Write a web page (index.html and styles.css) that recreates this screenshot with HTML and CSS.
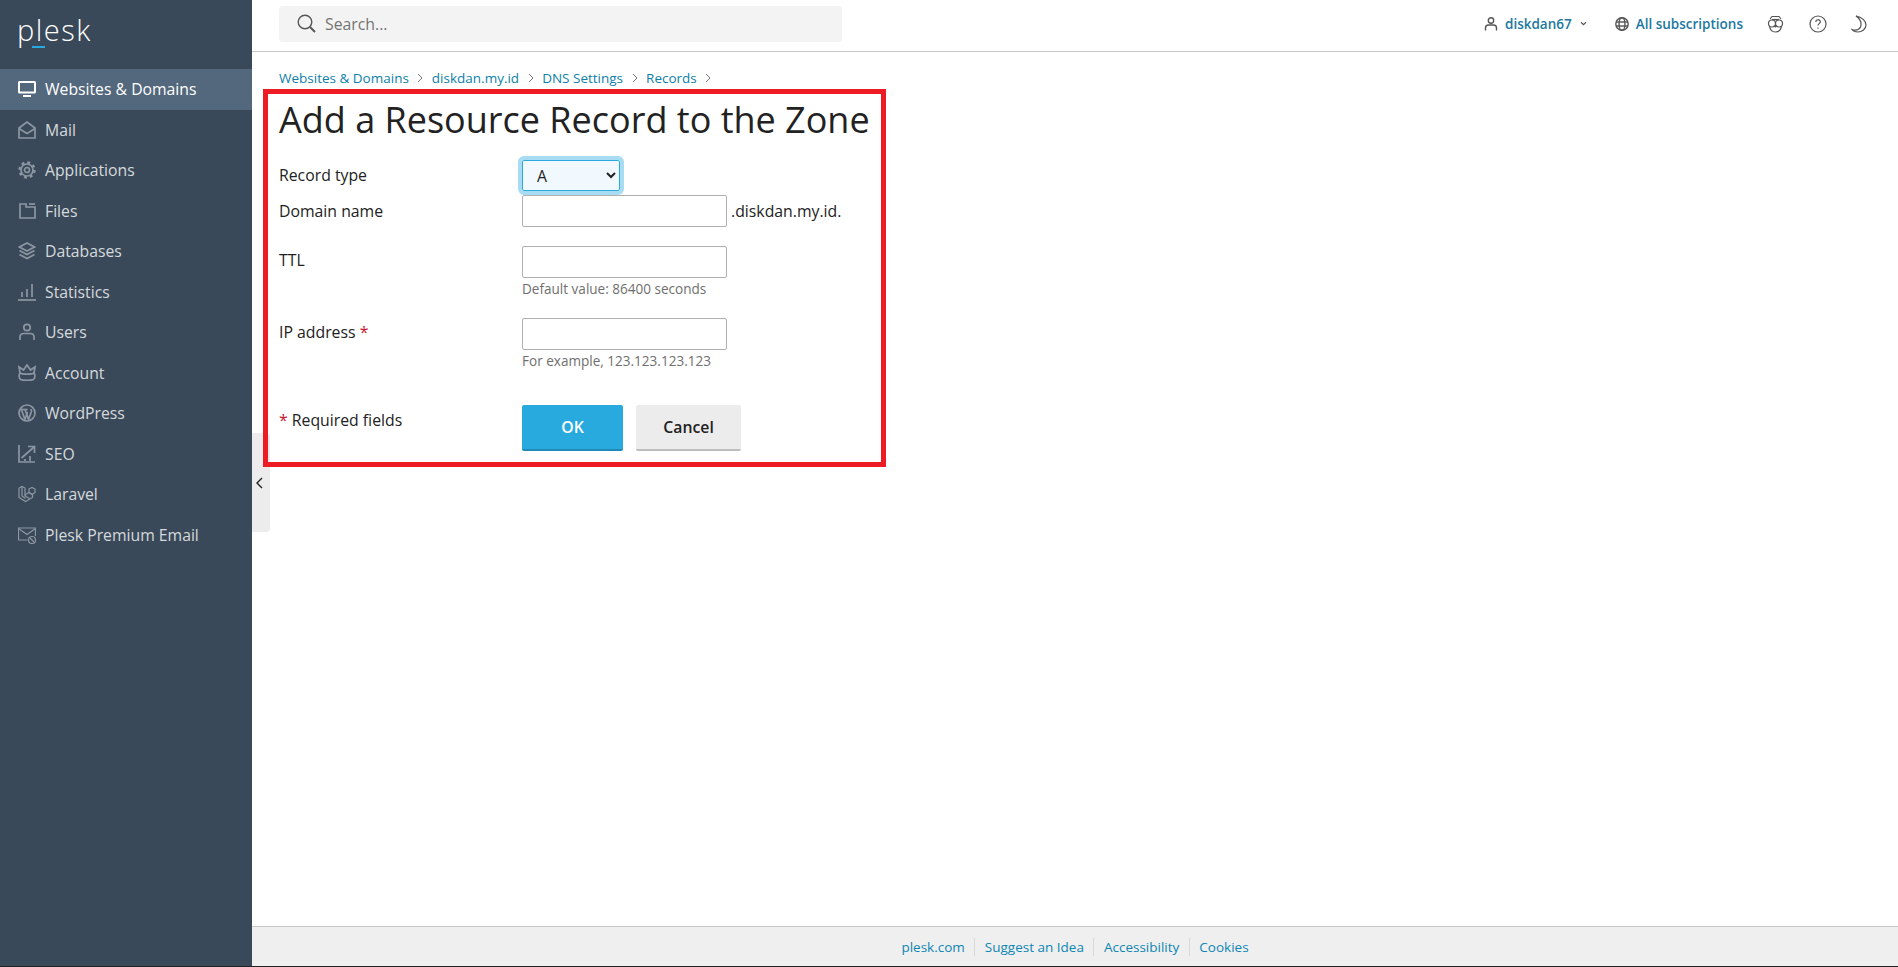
FILE: index.html
```html
<!DOCTYPE html>
<html lang="en">
<head>
  <meta charset="UTF-8">
  <title>Add a Resource Record to the Zone - Plesk</title>
  <link rel="stylesheet" href="styles.css">
</head>
<body>

  <!-- Sidebar -->
  <aside class="sidebar">
    <div class="logo">p<span class="logo-l">l</span>esk</div>
    <nav class="nav">
      <a class="nav-item active">
        <svg class="nav-icon" viewBox="0 0 18 18"><rect x="1" y="2" width="16" height="10.5" rx="0.5" stroke-width="2"/><path d="M5 16h8" stroke-width="2"/></svg>
        Websites &amp; Domains
      </a>
      <a class="nav-item">
        <svg class="nav-icon" viewBox="0 0 18 18"><path d="M1 7 9 1l8 6v10H1z"/><path d="M1 7.500l8 5 8-5"/></svg>
        Mail
      </a>
      <a class="nav-item">
        <svg class="nav-icon" viewBox="0 0 18 18"><circle cx="9" cy="9" r="2.500"/><circle cx="9" cy="9" r="6"/><circle class="gear-teeth" cx="9" cy="9" r="7.500"/></svg>
        Applications
      </a>
      <a class="nav-item">
        <svg class="nav-icon" viewBox="0 0 18 18"><path d="M2 2v14h15V5H8V2z"/><path d="M11 2h6"/></svg>
        Files
      </a>
      <a class="nav-item">
        <svg class="nav-icon" viewBox="0 0 18 18"><path d="M9 1l7.500 4L9 9 1.500 5z"/><path d="M1.500 8.500 9 12.500l7.500-4"/><path d="M1.500 12.500 9 16.500l7.500-4"/></svg>
        Databases
      </a>
      <a class="nav-item">
        <svg class="nav-icon" viewBox="0 0 18 18"><path d="M0 17h18"/><path d="M4 14V9"/><path d="M9 14V6"/><path d="M14 14V1"/></svg>
        Statistics
      </a>
      <a class="nav-item">
        <svg class="nav-icon" viewBox="0 0 18 18"><circle cx="9" cy="4.500" r="3.200"/><path d="M2 17v-3c0-2.500 2-3.500 4-3.500h6c2 0 4 1 4 3.500v3"/></svg>
        Users
      </a>
      <a class="nav-item">
        <svg class="nav-icon" viewBox="0 0 18 18"><path d="M2 9 1 3l4.500 3L9 1l3.500 5L17 3l-1 6"/><path d="M2 9c2 1.500 12 1.500 14 0 1.500 2 1 5-.5 6.500-2 1-11 1-13 0C1 14 .5 11 2 9z"/></svg>
        Account
      </a>
      <a class="nav-item">
        <svg class="nav-icon" viewBox="0 0 18 18"><circle cx="9" cy="9" r="8"/><path d="M3.500 6l3.500 9.500L9.500 8"/><path d="M7 5.500l3.500 10 2.800-7.500c.5-1.500 0-2.500-1-2.500"/><path d="M2.500 5.500h7"/></svg>
        WordPress
      </a>
      <a class="nav-item">
        <svg class="nav-icon" viewBox="0 0 18 18"><path d="M1 0v17h16"/><path d="M3.500 13 16 2"/><path d="M10 1.500h6.500V8"/><path d="M12 16v-5"/><path d="M7 16v-2"/></svg>
        SEO
      </a>
      <a class="nav-item">
        <svg class="nav-icon thin" viewBox="0 0 18 18"><path d="M1 3 4 1.500 7 3v8l4.500 2.500"/><path d="M1 3v9.500l6.500 4 7-4V9.500L11 7.500 7.500 9.500V11"/><path d="M4 1.500V11l3.500 2.500"/><path d="M11 4l3-1.500L17 4v3.500l-3 2-3-2z"/></svg>
        Laravel
      </a>
      <a class="nav-item">
        <svg class="nav-icon thin" viewBox="0 0 18 18"><path d="M9.500 14H.5V2h17v8"/><path d="M.5 2.500 9 8.500l8.500-6"/><circle cx="14" cy="14" r="3.500"/><path d="M12 12l4 4"/></svg>
        Plesk Premium Email
      </a>
    </nav>
  </aside>

  <div class="main">

    <!-- Top bar -->
    <header class="topbar">
      <div class="search">
        <svg class="search-icon" viewBox="0 0 19 19"><circle cx="8" cy="8" r="6.800"/><path d="M13 13l5 5" stroke-width="2"/></svg>
        <span>Search...</span>
      </div>
      <div class="top-links">
        <a class="top-link user-link">
          <svg class="top-icon small" viewBox="0 0 14 14"><circle cx="7" cy="3.500" r="2.700"/><path d="M1.500 13.500v-2.500c0-2 1.500-3 3-3h5c1.500 0 3 1 3 3v2.500"/></svg>
          diskdan67
          <svg class="caret" viewBox="0 0 8 6"><path d="M1 1.500l3 3 3-3"/></svg>
        </a>
        <a class="top-link subs-link">
          <svg class="top-icon small" viewBox="0 0 14 14"><circle cx="7" cy="7" r="6.200"/><ellipse cx="7" cy="7" rx="3" ry="6.200"/><path d="M1 5h12"/><path d="M1 9h12"/></svg>
          All subscriptions
        </a>
        <svg class="top-icon owl" viewBox="0 0 17 18"><path d="M3 4 5 1.500h7L14 4"/><path d="M5 4.500h7"/><circle cx="5" cy="8.500" r="3.500"/><circle cx="12" cy="8.500" r="3.500"/><path d="M2.500 11c.5 4 3 6 6 6s5.500-2 6-6"/><path d="M7 10.500l1.500 1.500 1.500-1.500"/></svg>
        <svg class="top-icon help" viewBox="0 0 18 18"><circle cx="9" cy="9" r="8"/><path d="M6.800 7c0-3 4.500-3 4.500-.2 0 1.800-2.300 1.800-2.300 3.700"/><path d="M9 12.500v1.300"/></svg>
        <svg class="top-icon moon" viewBox="0 0 16 18"><path d="M5 1c6 1 10 5 10 9 0 4-4 7-8 7-2.500 0-5-1-6-2.500 3.500 1 7 .5 8.500-2.500C11 8 9 4 5 1z"/></svg>
      </div>
    </header>

    <!-- Form -->
    <main class="content">
      <div class="breadcrumbs">
        <a>Websites &amp; Domains</a><svg class="sep" viewBox="0 0 6 10"><path d="M1 1l4 4-4 4"/></svg>
        <a>diskdan.my.id</a><svg class="sep" viewBox="0 0 6 10"><path d="M1 1l4 4-4 4"/></svg>
        <a>DNS Settings</a><svg class="sep" viewBox="0 0 6 10"><path d="M1 1l4 4-4 4"/></svg>
        <a>Records</a><svg class="sep" viewBox="0 0 6 10"><path d="M1 1l4 4-4 4"/></svg>
      </div>
      <h1 class="page-title">Add a Resource Record to the Zone</h1>

      <form class="record-form">
        <div class="form-row row-type">
          <label>Record type</label>
          <div class="field">
            <select class="select-type"><option>A</option></select>
          </div>
        </div>
        <div class="form-row row-domain">
          <label>Domain name</label>
          <div class="field">
            <input class="text-input" type="text"><span class="suffix">.diskdan.my.id.</span>
          </div>
        </div>
        <div class="form-row row-ttl">
          <label>TTL</label>
          <div class="field">
            <input class="text-input" type="text">
            <div class="hint">Default value: 86400 seconds</div>
          </div>
        </div>
        <div class="form-row row-ip">
          <label>IP address <span class="req">*</span></label>
          <div class="field">
            <input class="text-input" type="text">
            <div class="hint">For example, 123.123.123.123</div>
          </div>
        </div>
        <div class="form-row row-actions">
          <div class="req-note"><span class="req">*</span> Required fields</div>
          <div class="field buttons">
            <button class="btn btn-ok" type="button">OK</button>
            <button class="btn btn-cancel" type="button">Cancel</button>
          </div>
        </div>
      </form>

      <!-- Red highlight drawn over the form -->
      <div class="highlight"></div>
    </main>

    <div class="collapse-handle">
      <svg viewBox="0 0 7 12"><path d="M6 1 1 6l5 5"/></svg>
    </div>

    <footer class="footer">
      <a>plesk.com</a>
      <a>Suggest an Idea</a>
      <a>Accessibility</a>
      <a>Cookies</a>
    </footer>
  </div>

</body>
</html>
```

FILE: styles.css
```css
* {
  margin: 0;
  padding: 0;
  box-sizing: border-box;
}

html, body {
  height: 100%;
}

body {
  display: flex;
  overflow: hidden;
  font-family: "Open Sans", sans-serif;
  font-size: 15.8px;
  color: #222;
  background-color: #fff;
  border-bottom: 1px solid #222;
}

svg {
  fill: none;
  stroke: currentColor;
  stroke-width: 1.4;
  flex-shrink: 0;
}

/* Sidebar */
.sidebar {
  width: 252px;
  flex-shrink: 0;
  background-color: #3a4959;
}

.logo {
  height: 69px;
  padding: 5px 0 0 17px;
  font-size: 29px;
  font-weight: 300;
  line-height: 50px;
  letter-spacing: 1.5px;
  color: #fff;
}

.logo-l {
  position: relative;
}

.logo-l::after {
  content: "";
  position: absolute;
  left: -4px;
  bottom: 1px;
  width: 13px;
  height: 2px;
  background-color: #28aade;
}

.nav-item {
  display: flex;
  align-items: center;
  gap: 9px;
  height: 40.5px;
  padding-left: 18px;
  font-size: 15.75px;
  color: #d5d9dd;
}

.nav-item.active {
  background-color: #53687c;
  color: #fff;
}

.nav-icon {
  width: 18px;
  height: 18px;
  color: #8b96a2;
  stroke-width: 1.7;
}

.nav-icon.thin {
  stroke-width: 1.2;
}

.gear-teeth {
  stroke-width: 2.4;
  stroke-dasharray: 2.9 3;
}

.active .nav-icon {
  color: #fff;
}

/* Top bar */
.main {
  position: relative;
  flex: 1;
  display: flex;
  flex-direction: column;
  min-width: 0;
}

.topbar {
  display: flex;
  align-items: center;
  justify-content: space-between;
  height: 52px;
  padding: 0 31px 4px 27px;
  border-bottom: 1px solid #c8c8c8;
}

.search {
  display: flex;
  align-items: center;
  gap: 9px;
  width: 563px;
  height: 36px;
  padding-left: 18px;
  font-size: 15.8px;
  color: #737373;
  background-color: #f3f3f3;
  border-radius: 4px;
}

.search-icon {
  width: 19px;
  height: 19px;
  color: #555;
}

.top-links {
  display: flex;
  align-items: center;
}

.top-link {
  display: flex;
  align-items: center;
  gap: 7px;
  font-size: 13.5px;
  font-weight: 600;
  color: #21789f;
}

.top-icon {
  color: #555;
}

.top-icon.small {
  width: 14px;
  height: 14px;
}

.top-icon.moon {
  stroke-width: 1.2;
}

.caret {
  width: 7px;
  height: 5px;
  margin-left: 1px;
  color: #555;
}

.user-link {
  margin-right: 28px;
}

.owl {
  width: 17px;
  height: 18px;
  margin-left: 24px;
  stroke-width: 1.2;
}

.help {
  width: 18px;
  height: 18px;
  margin-left: 25px;
  stroke-width: 1.2;
}

.moon {
  width: 16px;
  height: 18px;
  margin-left: 24px;
}

/* Content */
.content {
  position: relative;
  z-index: 1;
  flex: 1;
  padding: 16px 27px 0;
}

.breadcrumbs {
  display: flex;
  align-items: center;
  height: 19px;
  font-size: 13.5px;
  color: #0e7fa8;
}

.sep {
  width: 6px;
  height: 10px;
  margin: 0 8.5px;
  color: #777;
  stroke-width: 1;
}

.page-title {
  margin-top: 9px;
  font-size: 36px;
  font-weight: 400;
  line-height: 48px;
  color: #222;
}

.record-form {
  margin-top: 15px;
}

.form-row {
  display: flex;
}

.form-row label, .req-note {
  width: 243px;
  flex-shrink: 0;
}

.row-type {
  height: 36px;
  padding-top: 1px;
}

.row-type label {
  padding-top: 4px;
}

.row-domain {
  height: 51px;
}

.row-domain label {
  padding-top: 5px;
}

.row-ttl {
  height: 72px;
}

.row-ttl label, .row-ip label {
  padding-top: 3px;
}

.row-ip {
  height: 87px;
}

.req {
  color: #c8102e;
}

.select-type {
  display: block;
  width: 98px;
  height: 31px;
  padding-left: 10px;
  font-family: "Open Sans", sans-serif;
  font-size: 15.8px;
  color: #222;
  background-color: #f2f9fe;
  border: 1px solid #28aade;
  border-radius: 2px;
  outline: 4px solid #a8dcf3;
  outline-offset: 0;
}

.text-input {
  width: 205px;
  height: 32px;
  vertical-align: top;
  background-color: #fff;
  border: 1px solid #b0b0b0;
  border-radius: 2px;
}

.suffix {
  margin-left: 4px;
  line-height: 32px;
}

.hint {
  margin-top: 2px;
  font-size: 13.55px;
  color: #6f6f6f;
}

.row-actions {
  align-items: flex-start;
}

.req-note {
  padding-top: 4px;
}

.buttons {
  display: flex;
  gap: 13px;
}

.btn {
  height: 46px;
  font-family: "Open Sans", sans-serif;
  font-size: 15.8px;
  font-weight: 600;
  border: none;
  border-radius: 2px;
}

.btn-ok {
  width: 101px;
  color: #fff;
  background-color: #28aade;
  border-bottom: 2px solid #1f8ab8;
}

.btn-cancel {
  width: 105px;
  color: #222;
  background-color: #ececec;
  border-bottom: 2px solid #bdbdbd;
}

/* Red annotation box */
.highlight {
  position: absolute;
  left: 11px;
  top: 37px;
  width: 623px;
  height: 378px;
  border: 5px solid #ed1c24;
  pointer-events: none;
}

/* Collapse handle */
.collapse-handle {
  position: absolute;
  left: 0;
  top: 433px;
  display: flex;
  align-items: center;
  width: 18px;
  height: 99px;
  padding-left: 4px;
  color: #222;
  background-color: #ececec;
  border-radius: 0 4px 4px 0;
}

.collapse-handle svg {
  width: 7px;
  height: 12px;
}

/* Footer */
.footer {
  display: flex;
  align-items: center;
  justify-content: center;
  height: 40px;
  font-size: 13.5px;
  background-color: #efefef;
  border-top: 1px solid #c8c8c8;
}

.footer a {
  padding: 0 9.5px;
  color: #0e86b4;
  border-left: 1px solid #d8d8d8;
  line-height: 18px;
}

.footer a:first-child {
  border-left: none;
}
```
